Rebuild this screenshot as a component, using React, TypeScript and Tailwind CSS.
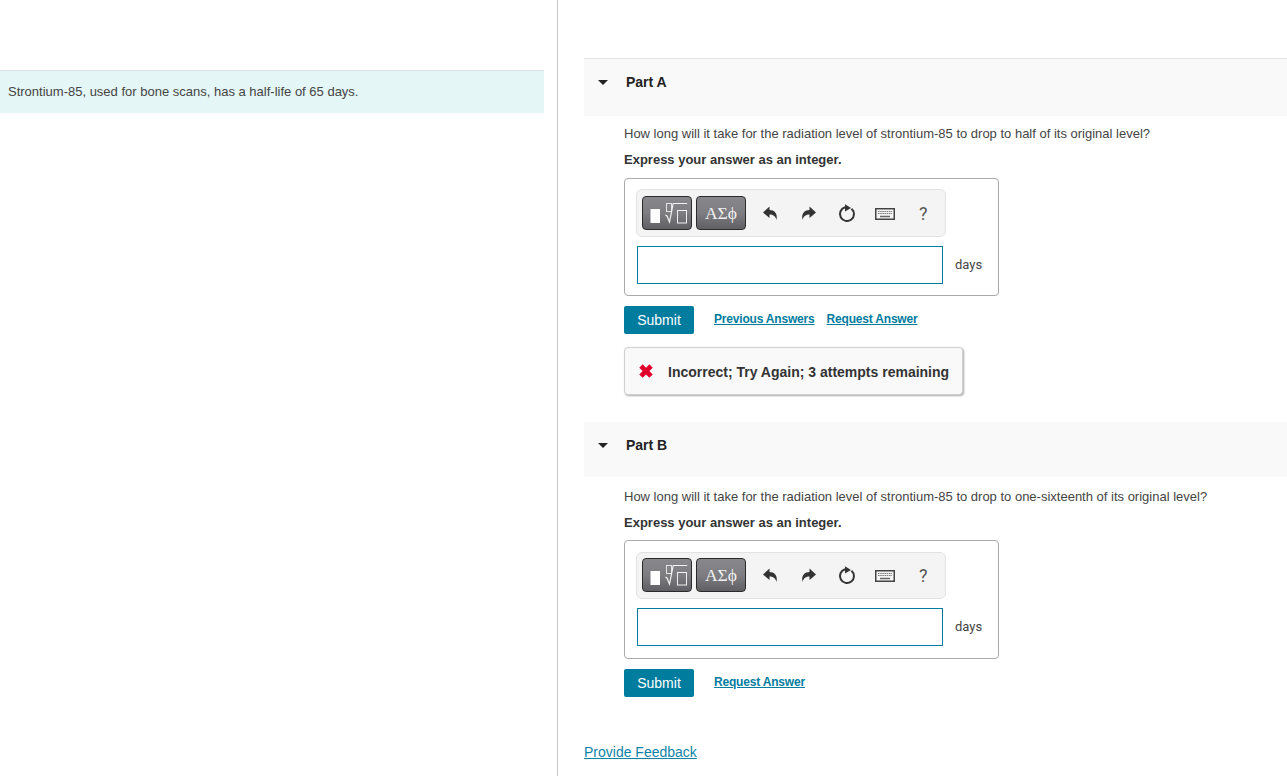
import React from "react";

function Toolbar({ tall }: { tall?: boolean }) {
  return (
    <div className={`ml-[11px] flex w-[310px] items-center rounded-[6px] border border-[#e2e2e2] bg-[#f4f4f4] pl-[5px] ${tall ? "mt-[10px] h-[48px]" : "mt-[11px] h-[47px] pb-px"}`}>
      <div className="flex h-[34px] w-[50px] items-center rounded-[4px] border border-[#2a2a2a] bg-gradient-to-b from-[#88888c] via-[#7e7e82] to-[#606064]">
        <svg width="48" height="32" viewBox="0 0 48 32" fill="none">
          <rect x="7.500" y="12" width="9.500" height="14" fill="#fff" />
          <rect x="23.500" y="6.500" width="5" height="8" stroke="#e4e4e4" />
          <path d="M22.500 18l1.500 1 2.500 6 3.700-18.500h14" stroke="#f4f4f4" strokeWidth="1.200" />
          <rect x="34.500" y="13.500" width="9" height="12.500" stroke="#f0f0f0" />
        </svg>
      </div>
      <div className="ml-1 flex h-[34px] w-[50px] items-center justify-center rounded-[4px] border border-[#2a2a2a] bg-gradient-to-b from-[#88888c] via-[#7e7e82] to-[#606064] font-['Liberation_Serif',serif] text-[17.500px] text-[#f0f0f0]">
        ΑΣϕ
      </div>
      <svg className="ml-[16px]" width="16" height="16" viewBox="0 0 16 16">
        <path d="M1 7.500L7.500 1.500V5C12 5 16 8 14.500 15 13.500 11 11 9.500 7.500 9.500V13z" fill="#333" />
      </svg>
      <svg className="ml-[23px]" width="16" height="16" viewBox="0 0 16 16">
        <path d="M15 7.500L8.500 1.500V5C4 5 0 8 1.500 15 2.500 11 5 9.500 8.500 9.500V13z" fill="#333" />
      </svg>
      <svg className="ml-[21px]" width="18" height="20" viewBox="0 0 18 20" fill="none">
        <path d="M13.500 5.700A7 7 0 1 1 7 4.300" stroke="#333" strokeWidth="2" />
        <path d="M7 1.200L13 5 7 8.500z" fill="#333" />
      </svg>
      <svg className="ml-[19px] mt-[2px]" width="20" height="12" viewBox="0 0 20 12" fill="none">
        <rect x="0.750" y="0.750" width="18.500" height="10.500" fill="#f4f4f4" stroke="#444" strokeWidth="1.500" />
        <path d="M3 3.500h14M3 5.500h14" stroke="#777" strokeWidth="1.200" strokeDasharray="1.500 0.700" />
        <path d="M5 8.500h10" stroke="#666" strokeWidth="1.500" />
      </svg>
      <span className="ml-[24px] font-['Roboto',sans-serif] text-[18px] text-[#555]">?</span>
    </div>
  );
}

function AnswerBox({ tall }: { tall?: boolean }) {
  return (
    <div className={`w-[375px] rounded-[4px] border border-[#aaaaaa] bg-white ${tall ? "h-[118px]" : "h-[119px]"}`}>
      <Toolbar tall={tall} />
      <div className="ml-3 mt-[9px] flex items-center">
        <div className="h-[38px] w-[306px] border border-[#007c9f] bg-white" />
        <span className="ml-3 font-['Roboto',sans-serif] text-[13px] text-[#444]">days</span>
      </div>
    </div>
  );
}

function PartHeader({ label, className }: { label: string; className: string }) {
  return (
    <div className={`flex items-start bg-[#f9f9f9] pl-[14px] pt-[15px] ${className}`}>
      <span className="mt-[6px] h-0 w-0 border-x-[5px] border-t-[5px] border-x-transparent border-t-[#222]" />
      <span className="ml-[18px] text-[14px] font-bold leading-[16px] text-[#222]">{label}</span>
    </div>
  );
}

function Part({
  question,
  links,
  tall,
}: {
  question: string;
  links: string[];
  tall?: boolean;
}) {
  return (
    <div className="pl-10">
      <p className="text-[13px] leading-[14px] text-[#444]">{question}</p>
      <p className="mt-3 text-[13px] font-bold leading-[14px] text-[#333]">Express your answer as an integer.</p>
      <div className={tall ? "mt-[11px]" : "mt-[10px]"}>
        <AnswerBox tall={tall} />
      </div>
      <div className="mt-[10px] flex items-start">
        <button className="h-7 w-[70px] rounded-[2px] bg-[#007c9f] text-[14px] text-white">Submit</button>
        <div className="ml-5 mt-[6px] flex gap-3">
          {links.map((l) => (
            <a key={l} className="text-[12px] font-bold leading-[14px] tracking-[-0.19px] text-[#007c9f] underline">
              {l}
            </a>
          ))}
        </div>
      </div>
    </div>
  );
}

export default function App() {
  return (
    <div className="flex h-[776px] overflow-hidden bg-white font-['Liberation_Sans',Arial,sans-serif]">
      <div className="h-full w-[558px] shrink-0 border-r border-[#c8c8c8] pt-[70px]">
        <div className="flex h-[43px] w-[544px] items-center border-t border-[#d9dee2] bg-[#e5f6f6] pl-2 text-[13px] text-[#444]">
          Strontium-85, used for bone scans, has a half-life of 65 days.
        </div>
      </div>
      <div className="min-w-0 flex-1 pl-[26px] pt-[58px]">
        <PartHeader label="Part A" className="h-[58px] border-t border-[#e4e4e4]" />
        <div className="mt-[11px]">
          <Part
            tall
            question="How long will it take for the radiation level of strontium-85 to drop to half of its original level?"
            links={["Previous Answers", "Request Answer"]}
          />
        </div>
        <div className="ml-10 mt-[13px] flex h-[48px] w-[339px] items-center rounded-[4px] border border-[#d0d0d0] bg-[#f9f9f9] pl-[12px] shadow-[1px_1px_2px_#aaa]">
          <svg width="18" height="18" viewBox="0 0 16 16">
            <path d="M2 5l3-3 3 3 3-3 3 3-3 3 3 3-3 3-3-3-3 3-3-3 3-3z" fill="#e0002b" />
          </svg>
          <span className="ml-[13px] mt-[2px] text-[14px] font-bold text-[#333]">Incorrect; Try Again; 3 attempts remaining</span>
        </div>
        <PartHeader label="Part B" className="mt-[27px] h-[55px]" />
        <div className="mt-[13px]">
          <Part
            question="How long will it take for the radiation level of strontium-85 to drop to one-sixteenth of its original level?"
            links={["Request Answer"]}
          />
        </div>
        <a className="mt-[47px] block text-[14px] leading-[16px] text-[#0f84a8] underline">Provide Feedback</a>
      </div>
    </div>
  );
}
